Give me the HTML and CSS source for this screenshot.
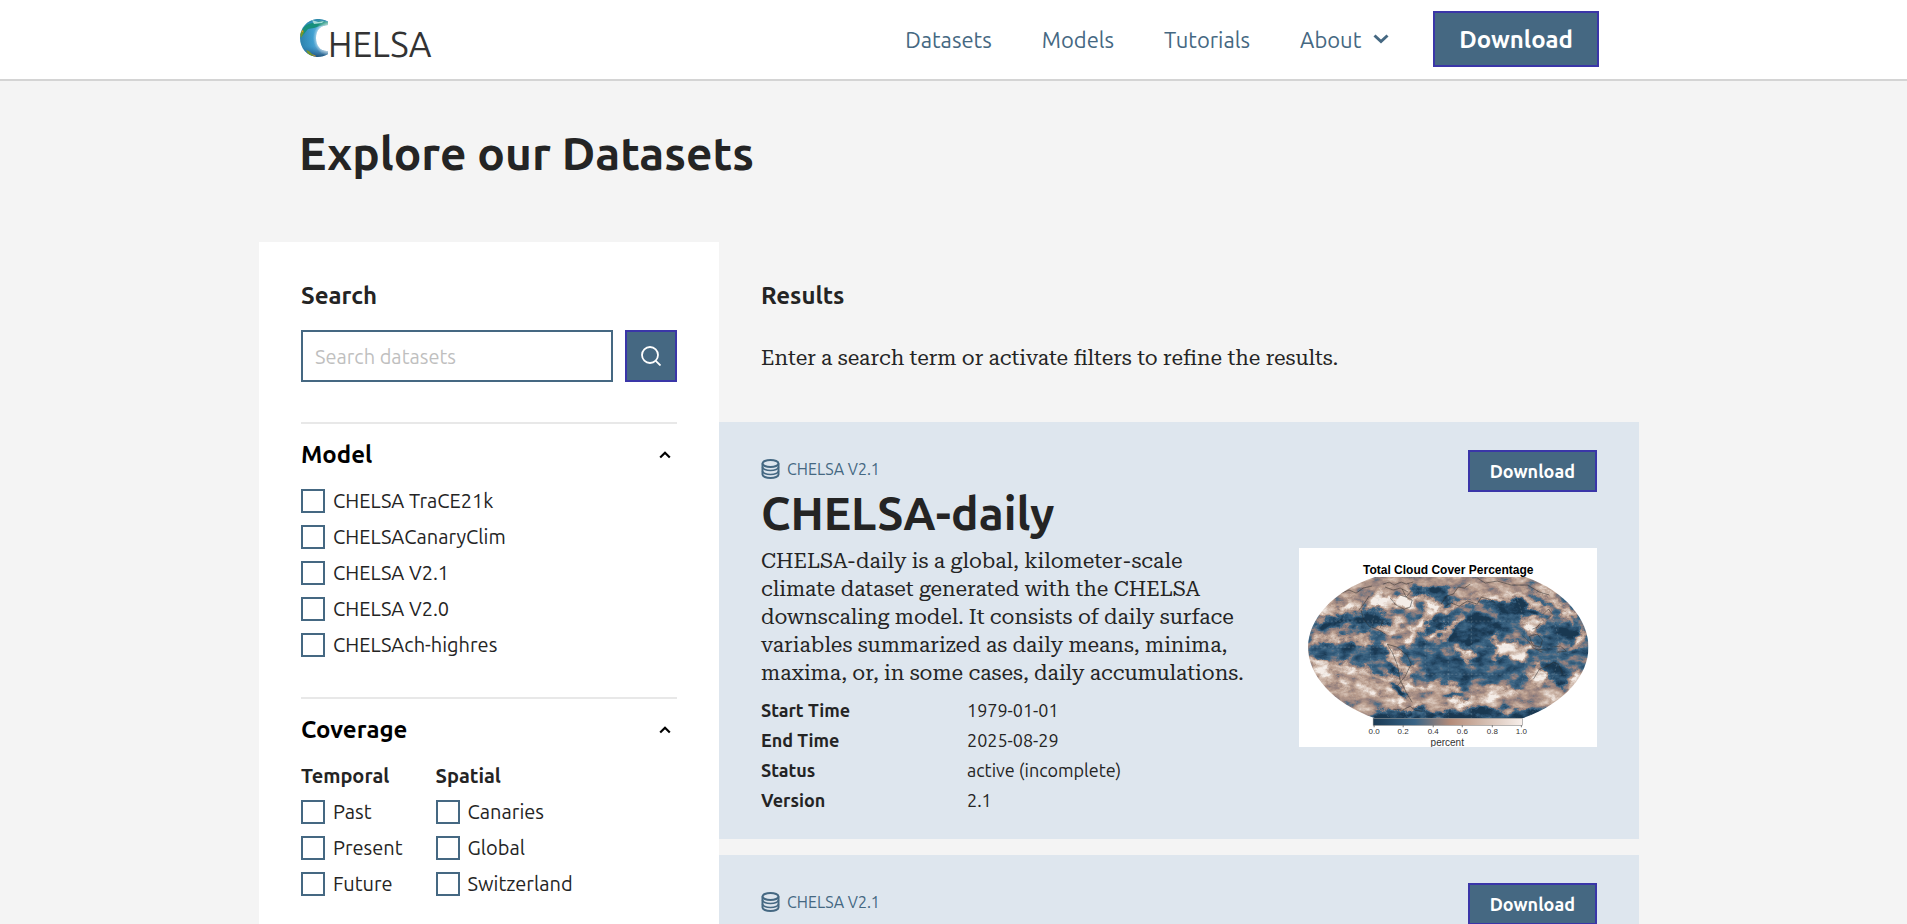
FILE: index.html
```html
<!DOCTYPE html>
<html lang="en">
<head>
<meta charset="utf-8">
<title>CHELSA Datasets</title>
<link rel="stylesheet" href="styles.css">
</head>
<body>
<svg class="sprite" aria-hidden="true">
  <symbol id="icon-db" viewBox="0 0 19 20">
    <g fill="none" stroke="currentColor" stroke-width="2">
      <ellipse cx="9.500" cy="4.500" rx="8" ry="3.500"/>
      <path d="M1.500 4.500v11c0 2 3.600 3.500 8 3.500s8-1.500 8-3.500v-11"/>
      <path d="M1.500 8c0 2 3.600 3.500 8 3.500s8-1.500 8-3.500M1.500 12c0 2 3.600 3.500 8 3.500s8-1.500 8-3.500" stroke-width="1.700"/>
    </g>
  </symbol>
  <symbol id="icon-up" viewBox="0 0 12 8">
    <path d="M1.200 6.500 6 1.800l4.800 4.700" fill="none" stroke="currentColor" stroke-width="2.200"/>
  </symbol>
</svg>

<header class="site-header">
  <div class="header-inner">
    <a class="logo" href="#" aria-label="CHELSA">
      <svg class="logo-art" width="134" height="46" viewBox="0 0 134 46">
        <defs>
          <linearGradient id="ocean" x1="0" y1="0" x2="1" y2="0">
            <stop offset="0" stop-color="#2c7fa8"/>
            <stop offset=".45" stop-color="#3f9fd0"/>
            <stop offset=".75" stop-color="#79bde0"/>
            <stop offset="1" stop-color="#2f88b8"/>
          </linearGradient>
          <linearGradient id="shade" x1="0" y1="0" x2="0" y2="1">
            <stop offset="0" stop-color="#0f6f86" stop-opacity=".75"/>
            <stop offset=".3" stop-color="#3f9fd0" stop-opacity="0"/>
            <stop offset=".7" stop-color="#2a6ea8" stop-opacity=".1"/>
            <stop offset="1" stop-color="#123f66" stop-opacity=".95"/>
          </linearGradient>
          <radialGradient id="glow" gradientUnits="userSpaceOnUse" cx="33" cy="22" r="19">
            <stop offset=".65" stop-color="#fff"/>
            <stop offset="1" stop-color="#fff" stop-opacity="0"/>
          </radialGradient>
          <clipPath id="crescent"><path d="M29 5.500C25 3.500 21 3 18 3 8 4 1 12 1 22s7 18 17 19c4 0 8-1 11-3v-3c-7 1-12-5-12-13S22 9 29 9z"/></clipPath>
        </defs>
        <g clip-path="url(#crescent)">
          <rect y="2" width="30" height="40" fill="url(#ocean)"/>
          <rect y="2" width="30" height="40" fill="url(#shade)"/>
          <path d="M3 15c2-6 7-8 12-8l6-2 8 1v3l-8 1-6 2-6 1-4 5-3 3z" fill="#17907c"/>
          <path d="M13 4l6 2 6-1-2 2-8 1z" fill="#a8dcd8"/>
          <path d="M1 18l3-5 1 3-3 6zM7 34l3 1 5 5h-5z" fill="#76962c"/>
          <path d="M2 16l2-2v2zM13 38l4 2-1 1z" fill="#dd9a2c"/>
          <circle cx="33" cy="22" r="19" fill="url(#glow)" opacity=".85"/>
        </g>
        <text class="logo-text" x="29" y="41">HELSA</text>
      </svg>
    </a>
    <nav class="nav" aria-label="Main">
      <a href="#">Datasets</a>
      <a href="#">Models</a>
      <a href="#">Tutorials</a>
      <button class="nav-menu" type="button">About
        <svg width="16" height="10" viewBox="0 0 16 10"><path d="M1.500 1.500 8 7.500l6.500-6" fill="none" stroke="currentColor" stroke-width="3"/></svg>
      </button>
      <button class="btn btn-large" type="button">Download</button>
    </nav>
  </div>
</header>

<main>
  <h1 class="page-title">Explore our Datasets</h1>
  <div class="explorer">
    <aside class="filters">
      <form class="search" role="search">
        <label class="section-title" for="q">Search</label>
        <div class="search-row">
          <input class="search-input" id="q" type="text" placeholder="Search datasets">
          <button class="btn search-btn" type="button" aria-label="Search">
            <svg width="20" height="20" viewBox="0 0 20 20"><g fill="none" stroke="currentColor" stroke-width="1.800"><circle cx="9" cy="9" r="8"/><path d="M14.800 14.800 19.500 19.500"/></g></svg>
          </button>
        </div>
      </form>

      <section class="filter">
        <button class="filter-toggle" type="button" aria-expanded="true">Model
          <svg width="12" height="8"><use href="#icon-up"/></svg></button>
        <div class="options">
          <label class="option"><input type="checkbox">CHELSA TraCE21k</label>
          <label class="option"><input type="checkbox">CHELSACanaryClim</label>
          <label class="option"><input type="checkbox">CHELSA V2.1</label>
          <label class="option"><input type="checkbox">CHELSA V2.0</label>
          <label class="option"><input type="checkbox">CHELSAch-highres</label>
        </div>
      </section>

      <section class="filter">
        <button class="filter-toggle" type="button" aria-expanded="true">Coverage
          <svg width="12" height="8"><use href="#icon-up"/></svg></button>
        <div class="option-groups">
          <div class="options">
            <h3 class="group-title">Temporal</h3>
            <label class="option"><input type="checkbox">Past</label>
            <label class="option"><input type="checkbox">Present</label>
            <label class="option"><input type="checkbox">Future</label>
          </div>
          <div class="options">
            <h3 class="group-title">Spatial</h3>
            <label class="option"><input type="checkbox">Canaries</label>
            <label class="option"><input type="checkbox">Global</label>
            <label class="option"><input type="checkbox">Switzerland</label>
          </div>
        </div>
      </section>
    </aside>

    <section class="results">
      <div class="results-intro">
        <h2 class="section-title">Results</h2>
        <p class="prose">Enter a search term or activate filters to refine the results.</p>
      </div>

      <article class="card">
        <div class="card-text">
          <p class="card-model"><svg width="19" height="20"><use href="#icon-db"/></svg>CHELSA V2.1</p>
          <h2 class="card-title">CHELSA-daily</h2>
          <p class="prose">CHELSA-daily is a global, kilometer-scale climate dataset generated with the CHELSA downscaling model. It consists of daily surface variables summarized as daily means, minima, maxima, or, in some cases, daily accumulations.</p>
          <dl class="facts">
            <dt>Start Time</dt><dd>1979-01-01</dd>
            <dt>End Time</dt><dd>2025-08-29</dd>
            <dt>Status</dt><dd>active (incomplete)</dd>
            <dt>Version</dt><dd>2.1</dd>
          </dl>
        </div>
        <div class="card-side">
          <button class="btn" type="button">Download</button>
          <svg class="map" viewBox="0 0 298 199" role="img" aria-label="World map of total cloud cover percentage">
            <defs>
              <clipPath id="globe"><path d="M76 29H226C266 43 289 72 289 99S266 155 223 170H76C33 155 9 126 9 99S33 43 76 29Z"/></clipPath>
              <filter id="clouds" filterUnits="userSpaceOnUse" x="0" y="20" width="298" height="160" color-interpolation-filters="sRGB">
                <feGaussianBlur in="SourceGraphic" stdDeviation="1.900" result="soft"/>
                <feTurbulence type="fractalNoise" baseFrequency=".07 .09" numOctaves="5" seed="7" result="warp"/>
                <feDisplacementMap in="soft" in2="warp" scale="18" xChannelSelector="R" yChannelSelector="G" result="swirl"/>
                <feTurbulence type="fractalNoise" baseFrequency=".07 .12" numOctaves="6" seed="12"/>
                <feColorMatrix values="1 0 0 0 0  1 0 0 0 0  1 0 0 0 0  0 0 0 0 1" result="grain"/>
                <feComposite in="swirl" in2="grain" operator="arithmetic" k1="0" k2=".95" k3=".850" k4="-.370"/>
                <feComponentTransfer>
                  <feFuncR type="table" tableValues=".1 .17 .25 .58 .72 .83 .96"/>
                  <feFuncG type="table" tableValues=".22 .32 .41 .5 .61 .75 .93"/>
                  <feFuncB type="table" tableValues=".32 .44 .53 .49 .55 .7 .91"/>
                  <feFuncA type="linear" slope="0" intercept="1"/>
                </feComponentTransfer>
              </filter>
              <linearGradient id="scale">
                <stop offset="0" stop-color="#1a3a54"/><stop offset=".28" stop-color="#3a6485"/>
                <stop offset=".52" stop-color="#b58c79"/><stop offset=".75" stop-color="#d4bdb0"/><stop offset="1" stop-color="#f7efeb"/>
              </linearGradient>
            </defs>
            <rect width="298" height="199" fill="#fff"/>
            <g clip-path="url(#globe)">
              <g filter="url(#clouds)">
                <rect x="-20" y="0" width="340" height="220" fill="#4c4c4c"/>
                <g fill="#999">
                  <path d="M10 112 50 122l40 10 50 8 60 0 50-8 40-10v30l-70 17H60L10 140z"/>
                  <path d="M40 24h220l14 26-30-6-30 0-60 2-50-2-50 6-40 10z"/>
                  <path d="M10 60l50-10 60 0 10 30-20 16-40-14-60 4z" fill="#6c6c6c"/>
                </g>
                <g fill="#000">
                  <ellipse cx="168" cy="80" rx="36" ry="14"/>
                  <ellipse cx="218" cy="58" rx="29" ry="9"/>
                  <ellipse cx="71" cy="73" rx="17" ry="9"/>
                  <ellipse cx="128" cy="73" rx="7" ry="13"/>
                  <ellipse cx="262" cy="85" rx="18" ry="9"/>
                  <ellipse cx="255" cy="125" rx="13" ry="10"/>
                  <ellipse cx="132" cy="44" rx="20" ry="5"/>
                  <path d="M90 112l12 14 6 26-14-10zM80 162h170v10H80z"/>
                  <path d="M12 74l36-6 14 8-40 6z"/>
                </g>
                <g fill="#2a2a2a">
                  <ellipse cx="50" cy="104" rx="42" ry="10"/>
                  <ellipse cx="165" cy="116" rx="50" ry="15"/>
                  <ellipse cx="160" cy="150" rx="14" ry="5"/>
                </g>
                <g fill="none" stroke="#f0f0f0" stroke-linecap="round">
                  <path d="M98 55q24-10 38 3-9 12-15 20l-14 16" stroke-width="8"/>
                  <path d="M146 60l22-8 26-5 34 4 20 12" stroke-width="5"/>
                  <path d="M128 93q14-4 20-14l14-9" stroke-width="5"/>
                  <path d="M20 64l28-4 12-6" stroke-width="8"/>
                  <path d="M14 92l30-3 30 4" stroke-width="4"/>
                  <path d="M86 82l18-10" stroke-width="7"/>
                  <path d="M11 112l16 12 20 14" stroke-width="10"/>
                  <path d="M40 118l42 10 40 12 40-2" stroke-width="5"/>
                  <path d="M91 100l8 16 12 10" stroke-width="8"/>
                  <path d="M60 140l30 6 24 16" stroke-width="5"/>
                  <path d="M150 156l30-4 34-10" stroke-width="6"/>
                  <path d="M258 156l22-30" stroke-width="5"/>
                  <path d="M284 86l-12 18" stroke-width="5"/>
                  <path d="M156 100l14 12M196 94l12 6" stroke-width="6"/>
                  <path d="M240 40l34 30" stroke-width="5"/>
                </g>
                <g fill="#fff">
                  <ellipse cx="82" cy="55" rx="12" ry="8"/>
                  <ellipse cx="107" cy="54" rx="9" ry="7"/>
                  <ellipse cx="214" cy="102" rx="18" ry="9"/>
                  <ellipse cx="233" cy="76" rx="9" ry="7"/>
                  <ellipse cx="239" cy="128" rx="8" ry="7"/>
                </g>
              </g>
              <g fill="none" stroke="#b9c2c9" stroke-opacity=".4" stroke-width=".600" stroke-dasharray="2 2">
                <path d="M20 73h258M9 99h280M20 126h258M149 29v141M126 29v141M172 29v141"/>
                <path d="M90 29Q52 99 90 170M70 29Q8 99 70 170M208 29Q246 99 208 170M228 29Q290 99 228 170"/>
              </g>
              <g fill="none" stroke="#2a2a2a" stroke-opacity=".7" stroke-width=".700">
                <path d="M42 45l8-3 7 3 7-5 9-2M60 62l6-8 4-6M62 62l2 8 6 8 10 4 6 4M84 72l-3 8M88 96l5 8 5 12 3 16 7 14 5 8M88 96l10 3 10 8 4 9-6 12-8 10"/>
                <path d="M84 36l6-2 5 3 7-3 5 2 7-2M86 39l8 3 7-2 8 4M91 50l6 7 8 4 6-2 2-7-6-3-4-8M101 47l6 2 5-6"/>
                <path d="M142 56l5-8 7-2 5-7 6 1 6-4M146 58l6-3 8 3 8-5 10 3 4-7 8 2 6 4M178 30l8 5 12-2 14 4 16 0 12 7 10 3"/>
                <path d="M223 87l6 6 5 7 9 4M230 88l8-2 5 6-2 7-8-2zM238 101l9 1M253 99l8-1 6 5-9 1M233 81l5-2 3-4M244 66l5-5 4 5-5 5"/>
                <path d="M234 131l6-10 8-3 6-4 5 2 4 9M94 161l9 1 8-4 5 4 7 1"/>
              </g>
            </g>
            <rect x="74" y="170" width="149" height="7" fill="url(#scale)" stroke="#777" stroke-width=".500"/>
            <path d="M75 177v2M104 177v2M134 177v2M163 177v2M193 177v2M222 177v2" stroke="#444" stroke-width=".700"/>
            <g class="map-text">
              <text class="map-title" x="149" y="26">Total Cloud Cover Percentage</text>
              <text x="75" y="186">0.0</text><text x="104" y="186">0.2</text><text x="134" y="186">0.4</text>
              <text x="163" y="186">0.6</text><text x="193" y="186">0.8</text><text x="222" y="186">1.0</text>
              <text class="map-unit" x="148" y="198">percent</text>
            </g>
          </svg>
        </div>
      </article>

      <article class="card">
        <div class="card-text">
          <p class="card-model"><svg width="19" height="20"><use href="#icon-db"/></svg>CHELSA V2.1</p>
        </div>
        <div class="card-side">
          <button class="btn" type="button">Download</button>
        </div>
      </article>
    </section>
  </div>
</main>
</body>
</html>
```
FILE: styles.css
```css
:root {
  --blue: #456882;
  --ink: #242424;
  --sans: Ubuntu, "Noto Sans", "Open Sans", sans-serif;
  --serif: "Roboto Serif", "DejaVu Serif", serif;
}

* { box-sizing: border-box; }

body {
  margin: 0;
  background: #f4f4f4;
  color: var(--ink);
  font-family: var(--sans);
  font-size: 20px;
}

h1, h2, h3, p, dl, dd { margin: 0; }
button, input { font: inherit; }
svg { display: block; flex: none; }
.sprite { position: absolute; width: 0; height: 0; }

.site-header {
  background: #fff;
  border-bottom: 2px solid #d4d4d4;
  padding: 11px 9px 12px 0;
}

.header-inner {
  display: flex;
  align-items: center;
  justify-content: space-between;
  max-width: 1300px;
  margin: 0 auto;
}

.logo-art { overflow: visible; }
.logo-text { font: 35px var(--sans); fill: #333; }

.nav {
  display: flex;
  align-items: center;
  gap: 50px;
  font-size: 22px;
  color: var(--blue);
}

.nav a { color: inherit; text-decoration: none; }

.nav-menu {
  display: flex;
  align-items: center;
  gap: 12px;
  padding: 0;
  border: 0;
  background: none;
  color: inherit;
}

.btn {
  display: flex;
  align-items: center;
  justify-content: center;
  height: 42px;
  padding: 0 20px;
  border: 2px solid #3a36a8;
  background: var(--blue);
  color: #fff;
  font-size: 18px;
  font-weight: 600;
}

.btn-large { height: 56px; margin-left: -6px; padding: 0 24px; font-size: 24px; }

.page-title {
  max-width: 1300px;
  margin: 0 auto;
  padding: 40px 0 57px;
  font-size: 46px;
  font-weight: 600;
  line-height: 64px;
}

main { padding-right: 9px; }

.explorer {
  display: grid;
  grid-template-columns: 1fr 2fr;
  max-width: 1380px;
  margin: 0 auto;
}

.filters { background: #fff; padding: 40px 42px; }

.section-title {
  display: block;
  font-size: 24px;
  font-weight: 600;
  line-height: 28px;
}

.search-row { display: flex; gap: 12px; margin: 20px 0 40px; }

.search-input {
  flex: 1;
  min-width: 0;
  height: 52px;
  padding: 0 12px;
  border: 2px solid var(--blue);
  background: #fff;
}

.search-input::placeholder { color: #bfbfbf; }
.search-btn { width: 52px; height: 52px; padding: 0; }

.filter { border-top: 2px solid #e8e8e8; padding: 17px 0 40px; }

.filter-toggle {
  display: flex;
  align-items: center;
  justify-content: space-between;
  width: 100%;
  margin-bottom: 20px;
  padding: 0 6px 0 0;
  border: 0;
  background: none;
  color: #000;
  font-size: 24px;
  font-weight: 600;
  line-height: 28px;
}

.options { display: grid; gap: 12px; }
.option-groups { display: flex; gap: 33px; }
.group-title { font-size: 20px; font-weight: 600; line-height: 24px; }

.option { display: flex; align-items: center; gap: 8px; line-height: 24px; }

.option input {
  appearance: none;
  width: 24px;
  height: 24px;
  margin: 0;
  border: 2px solid var(--blue);
  background: #fff;
}

.results-intro { padding: 40px 42px 50px; }
.results-intro .prose { margin-top: 34px; }

.prose { font-family: var(--serif); font-size: 21px; line-height: 28px; }

.card {
  display: grid;
  grid-template-columns: 5fr 3fr;
  gap: 40px;
  padding: 28px 42px 24px;
  background: #dee6ee;
}

.card + .card { margin-top: 16px; }
.card-text { padding: 7px 4px 0 0; }

.card-model {
  display: flex;
  align-items: center;
  gap: 7px;
  color: var(--blue);
  font-size: 16px;
  line-height: 24px;
}

.card-title { margin: 6px 0 8px; font-size: 46px; font-weight: 600; line-height: 52px; }

.facts {
  display: grid;
  grid-template-columns: 206px 1fr;
  margin-top: 8px;
  font-size: 18px;
  line-height: 30px;
}

.facts dt { font-weight: 600; }

.card-side { display: flex; flex-direction: column; align-items: flex-end; gap: 56px; }

.map { width: 100%; height: auto; }
.map-text { font: 8px "Liberation Sans", Arial, sans-serif; text-anchor: middle; fill: #333; }
.map-title { font-size: 12px; font-weight: 700; fill: #000; }
.map-unit { font-size: 10px; }
```
